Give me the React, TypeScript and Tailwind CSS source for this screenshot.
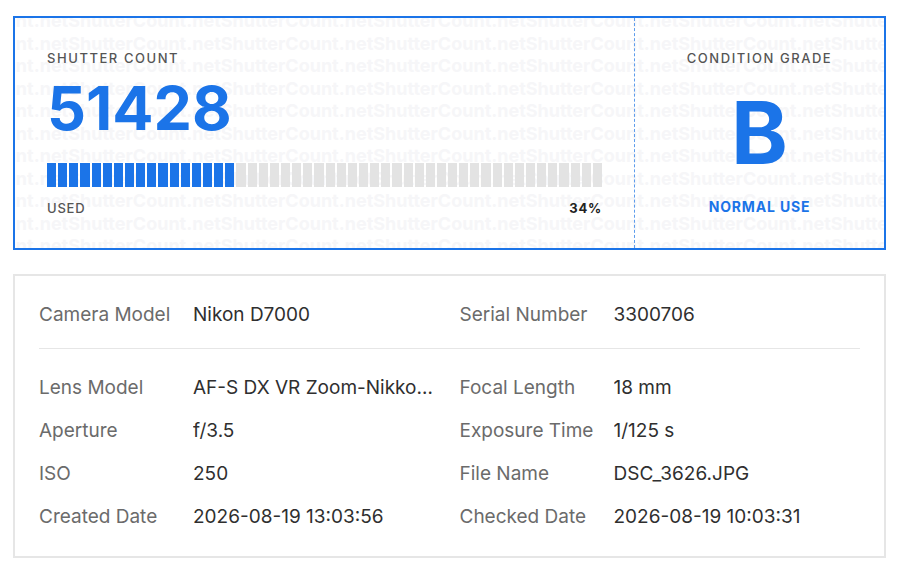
const stats = [
  { label: "Camera Model", value: "Nikon D7000" },
  { label: "Serial Number", value: "3300706" },
];

const details = [
  { label: "Lens Model", value: "AF-S DX VR Zoom-Nikkor 18-105mm f/3.5-5.6G ED" },
  { label: "Focal Length", value: "18 mm" },
  { label: "Aperture", value: "f/3.5" },
  { label: "Exposure Time", value: "1/125 s" },
  { label: "ISO", value: "250" },
  { label: "File Name", value: "DSC_3626.JPG" },
  { label: "Created Date", value: "2026-08-19 13:03:56" },
  { label: "Checked Date", value: "2026-08-19 10:03:31" },
];

const SEGMENTS = 50;
const usedPercent = 34;

function Watermark() {
  const line = Array.from({ length: 7 }, () => "ShutterCount.net").join("");
  return (
    <div
      aria-hidden="true"
      className="pointer-events-none absolute inset-0 overflow-hidden select-none"
    >
      <div className="-mt-2 flex flex-col">
        {Array.from({ length: 12 }).map((_, i) => (
          <div
            key={i}
            className="flex justify-center whitespace-nowrap text-[18px] leading-[22.5px] font-bold text-[#f6f6f8]"
          >
            {line}
          </div>
        ))}
      </div>
    </div>
  );
}

function Row({ label, value }: { label: string; value: string }) {
  return (
    <div className="flex min-w-0 items-center text-[19px] leading-[30px]">
      <span className="w-[154px] shrink-0 text-[#6b6b6b]">{label}</span>
      <span className="min-w-0 truncate text-[#2f2f2f]">{value}</span>
    </div>
  );
}

export default function App() {
  const filled = Math.round((SEGMENTS * usedPercent) / 100);

  return (
    <div
      className="min-h-screen bg-white pt-4 pl-[13px]"
      style={{ fontFamily: "Inter, 'Noto Sans', sans-serif" }}
    >
      <div className="w-[873px]">
        {/* shutter count card */}
        <div className="relative flex h-[234px] border-2 border-[#1b74e8]">
          <Watermark />
          <div className="relative flex flex-1 flex-col p-8">
            <div className="text-[13px] leading-4 font-medium tracking-[0.12em] text-[#555]">
              SHUTTER COUNT
            </div>
            <div className="mt-3 text-[61px] leading-none font-bold text-[#1b74e8]">
              51428
            </div>
            <div className="mt-6 flex h-6 gap-[2px]">
              {Array.from({ length: SEGMENTS }).map((_, i) => (
                <div
                  key={i}
                  className={
                    i < filled ? "flex-1 bg-[#1b74e8]" : "flex-1 bg-[#e3e3e3]"
                  }
                />
              ))}
            </div>
            <div className="mt-[13px] flex items-center justify-between text-[13px] leading-4">
              <span className="font-medium tracking-[0.06em] text-[#555]">USED</span>
              <span className="font-bold tracking-[0.06em] text-[#222]">
                {usedPercent}%
              </span>
            </div>
          </div>
          <div className="relative flex w-[250px] flex-col items-center border-l border-dashed border-[#5d9cec] pt-8">
            <div className="text-[13px] leading-4 font-medium tracking-[0.12em] text-[#555]">
              CONDITION GRADE
            </div>
            <div className="mt-6 text-[86px] leading-none font-bold text-[#1b74e8]">
              B
            </div>
            <div className="mt-[23px] text-[14px] leading-4 font-bold tracking-[0.06em] text-[#1b74e8]">
              NORMAL USE
            </div>
          </div>
        </div>

        {/* exif details card */}
        <div className="mt-6 border-2 border-[#e6e6e6] px-6 pt-6 pb-6">
          <div className="grid grid-cols-2 gap-x-5">
            {stats.map((s) => (
              <Row key={s.label} label={s.label} value={s.value} />
            ))}
          </div>
          <div className="mt-[18px] border-t border-[#e6e6e6] pt-6">
            <div className="grid grid-cols-2 gap-x-5 gap-y-[13px]">
              {details.map((d) => (
                <Row key={d.label} label={d.label} value={d.value} />
              ))}
            </div>
          </div>
        </div>
      </div>
    </div>
  );
}
